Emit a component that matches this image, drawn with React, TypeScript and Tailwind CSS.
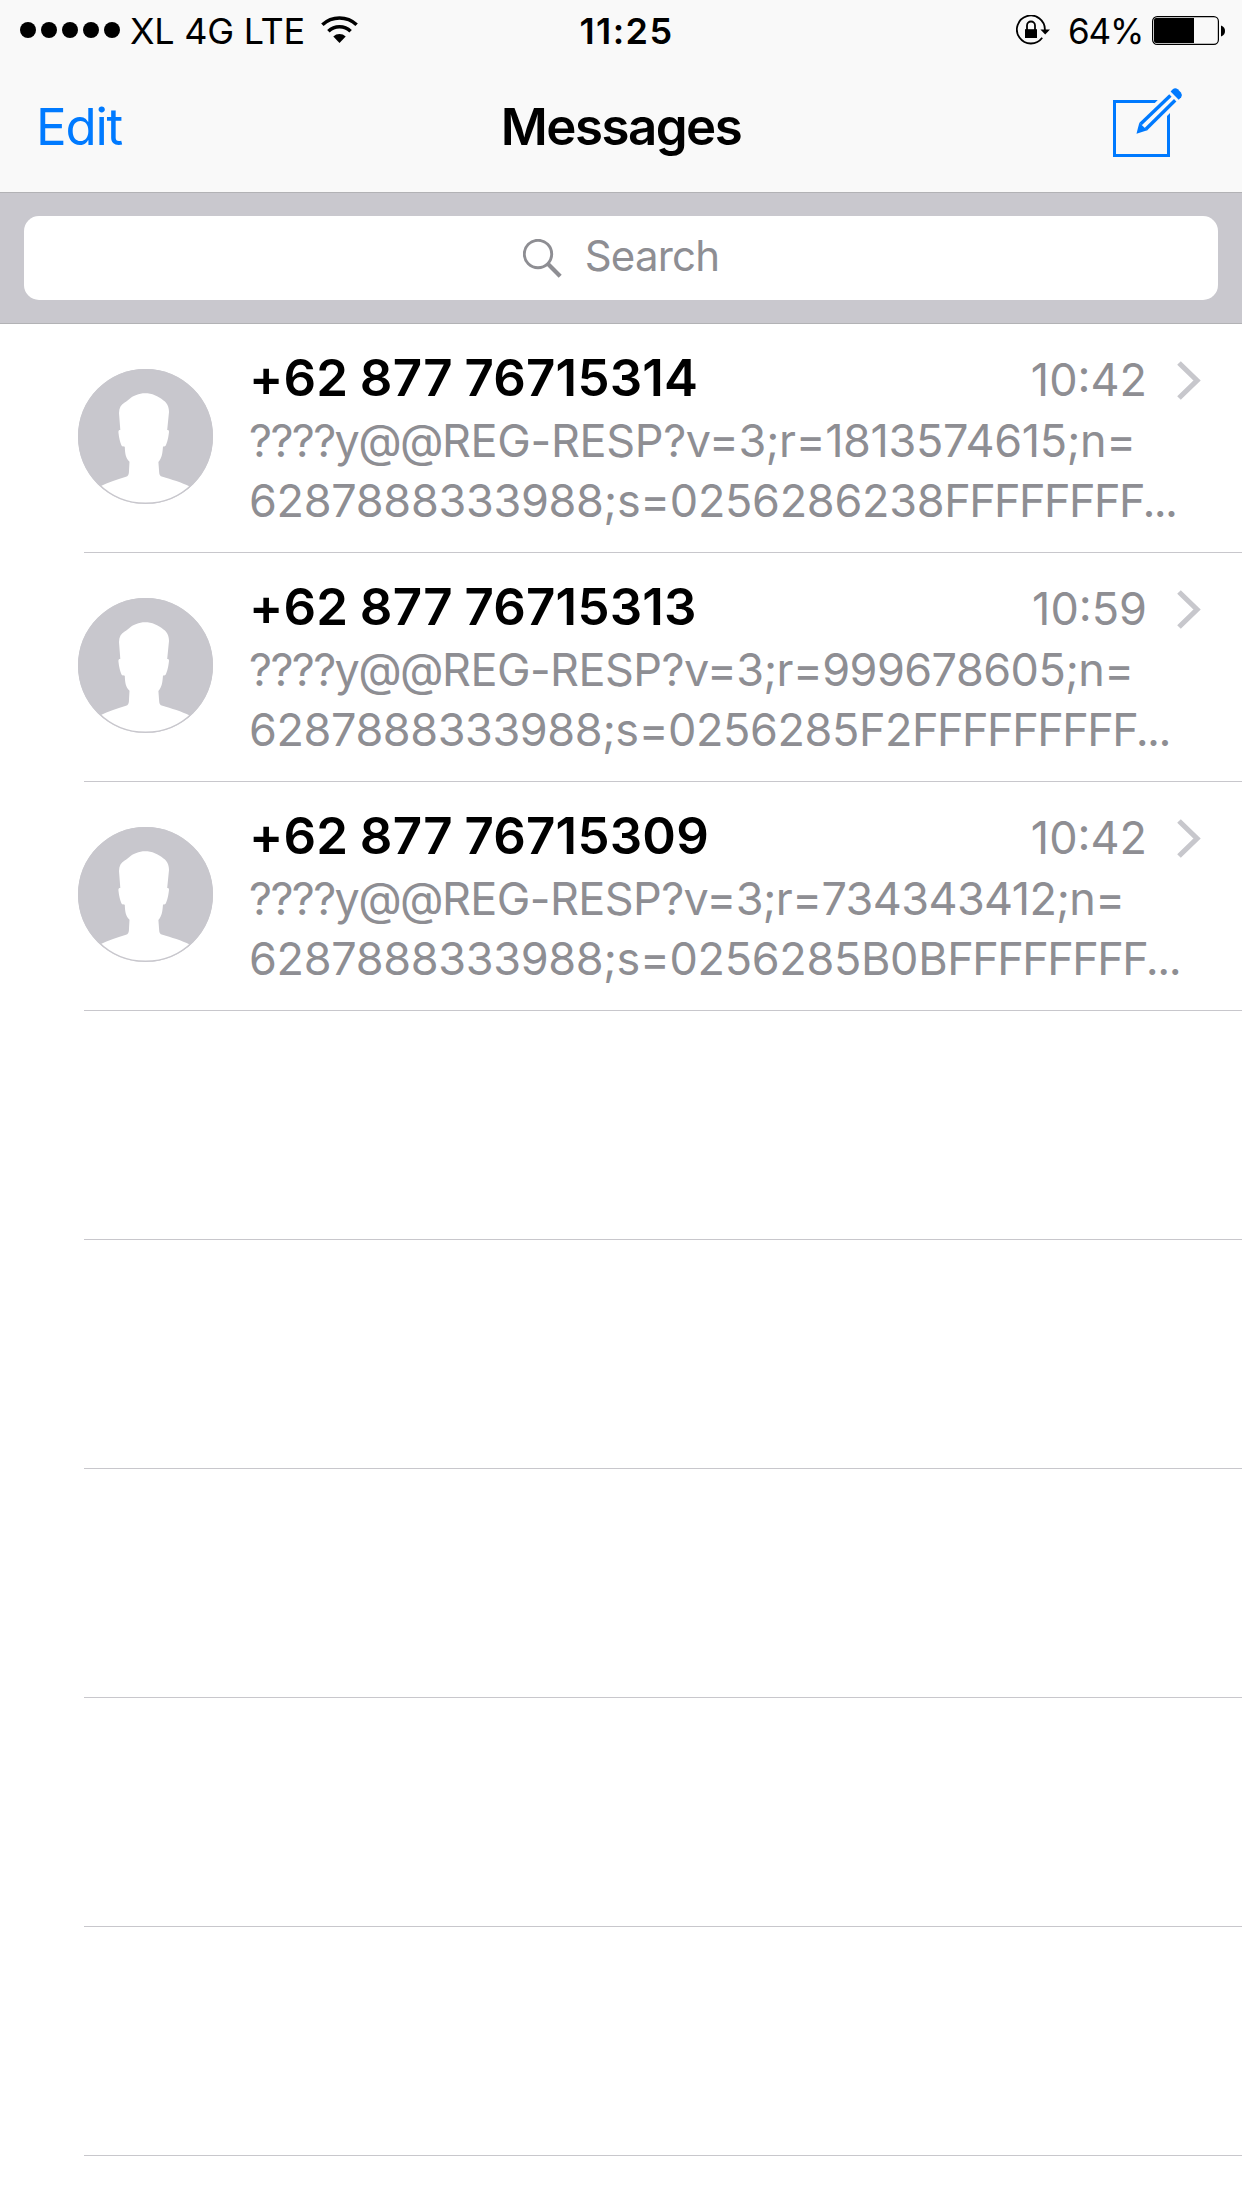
type Run = { text: string; tracking: string };

type Message = {
  sender: string;
  time: string;
  preview: Run[][];
};

const messages: Message[] = [
  {
    sender: "+62 877 76715314",
    time: "10:42",
    preview: [
      [
        { text: "????y@@", tracking: "tracking-[-1.61px]" },
        { text: "REG-RESP?v=3;r=1813574615;n=", tracking: "tracking-[-0.34px]" },
      ],
      [
        { text: "6287888333988;s=0256286238", tracking: "tracking-[-0.3px]" },
        { text: "FFFFFFFF...", tracking: "tracking-[-1.6px]" },
      ],
    ],
  },
  {
    sender: "+62 877 76715313",
    time: "10:59",
    preview: [
      [
        { text: "????y@@", tracking: "tracking-[-1.61px]" },
        { text: "REG-RESP?v=3;r=999678605;n=", tracking: "tracking-[-0.54px]" },
      ],
      [
        { text: "6287888333988;s=0256285F2", tracking: "tracking-[-0.41px]" },
        { text: "FFFFFFFFF...", tracking: "tracking-[-1.56px]" },
      ],
    ],
  },
  {
    sender: "+62 877 76715309",
    time: "10:42",
    preview: [
      [
        { text: "????y@@", tracking: "tracking-[-1.61px]" },
        { text: "REG-RESP?v=3;r=734343412;n=", tracking: "tracking-[-0.59px]" },
      ],
      [
        { text: "6287888333988;s=0256285B0B", tracking: "tracking-[-0.32px]" },
        { text: "FFFFFFFF...", tracking: "tracking-[-1.56px]" },
      ],
    ],
  },
];

const emptyRows = [0, 1, 2, 3, 4];

function WifiIcon() {
  return (
    <svg width="37" height="27" viewBox="0 0 37 27" fill="none" stroke="#000" strokeWidth="3.6">
      <path d="M1.4 8.7A25 25 0 0 1 35.6 8.7" />
      <path d="M7.4 15.2A16.2 16.2 0 0 1 29.6 15.2" />
      <path d="M18.5 27L12.3 20.4A9.2 9.2 0 0 1 24.7 20.4Z" fill="#000" stroke="none" />
    </svg>
  );
}

function RotationLockIcon() {
  return (
    <svg width="34" height="30" viewBox="0 0 34 30" fill="none">
      <path d="M28.9 15A14 14 0 1 0 26.2 22.8" stroke="#000" strokeWidth="1.8" />
      <path d="M24.4 14.5H34L29.2 19.4Z" fill="#000" />
      <rect x="9" y="14.2" width="12" height="8.8" fill="#000" />
      <path d="M11 15V10.5A4 4 0 0 1 19 10.5V15" stroke="#000" strokeWidth="1.8" />
    </svg>
  );
}

function BatteryIcon() {
  return (
    <svg width="73" height="29" viewBox="0 0 73 29" fill="none">
      <rect x="0.6" y="0.6" width="65.8" height="27.8" rx="4.6" stroke="#000" strokeWidth="1.2" />
      <path d="M4 2H42V27H4A2 2 0 0 1 2 25V4A2 2 0 0 1 4 2Z" fill="#000" />
      <path d="M69 9.5C72 10.5 73 12.5 73 15S72 19.5 69 20.5Z" fill="#000" />
    </svg>
  );
}

function ComposeIcon() {
  return (
    <svg width="70" height="70" viewBox="0 0 70 70" fill="none" stroke="#007aff">
      <path d="M44.8 13H0V70H57V26L54 29V67H3V16H41.8Z" fill="#007aff" stroke="none" />
      <path d="M23.5 46.7L26.3 35.8L34.3 43.3Z" fill="#007aff" stroke="none" />
      <path d="M27.6 37L57.4 8.4" strokeWidth="3.4" />
      <path d="M32.8 42.2L62.2 13.2" strokeWidth="3.4" />
      <path d="M57.6 4.4L60 2Q62.3 0.3 64.8 2.2L67.9 5.6Q69.8 8.2 68.2 10.3L65.7 12.7Z" fill="#007aff" stroke="none" />
    </svg>
  );
}

function SearchIcon() {
  return (
    <svg width="39" height="39" viewBox="0 0 39 39" fill="none" stroke="#8e8e93">
      <circle cx="15" cy="15" r="13.7" strokeWidth="2.9" />
      <path d="M24.8 24.8L37.2 37.2" strokeWidth="4.2" />
    </svg>
  );
}

function Chevron() {
  return (
    <svg className="mt-[5px] shrink-0" width="25" height="39" viewBox="0 0 25 39" fill="none">
      <path d="M2 2L20 19.5L2 37" stroke="#c7c7cc" strokeWidth="5.2" />
    </svg>
  );
}

function Avatar() {
  return (
    <svg className="shrink-0" width="135" height="135" viewBox="0 0 135 135">
      <circle cx="67.5" cy="67.5" r="67.5" fill="#c8c7cd" />
      <path
        fill="#fff"
        d="M67 24.3C61 24.3 55 27 52 29.5C49 31.5 48.5 33 47 33.3C43 35.5 41 39 41 44L42.3 61C40.5 61 40.3 62 40.5 64C41 69 42 73 43.5 76.5C44.5 77.8 45.5 77.3 46.8 77.7C47 84 47.5 89 51.5 92.7L50.9 103.5C50.7 106 50 107 48 107.8C40 110.5 30 113.5 22.3 117.2A66.2 66.2 0 0 0 111.7 117.5C104 113.5 93 110.5 84.5 107.8C82 107 81.3 106 81.2 103.5L80.4 93C84 89 84.5 84 85 77.5C86.5 77.5 87.500 77.3 88 76C90 71 90.5 67 91 63C91 61.5 90.7 61 89.2 61L91 43C91 37 88.5 33.5 85.5 31.5C80 27 74 24.3 67 24.3Z"
      />
      <circle cx="67.5" cy="67.500" r="66.8" fill="none" stroke="#c8c7cd" strokeWidth="1.4" />
    </svg>
  );
}

function StatusBar() {
  return (
    <div className="grid h-[60px] grid-cols-[1fr_auto_1fr] text-[36px] leading-[62px] text-black">
      <div className="flex items-start pl-5">
        <div className="flex gap-[5px] pt-[22px]">
          {[0, 1, 2, 3, 4].map((dot) => (
            <span key={dot} className="size-4 rounded-full bg-black" />
          ))}
        </div>
        <span className="ml-[10px] tracking-[-0.24px]">XL 4G LTE</span>
        <div className="ml-4 pt-4">
          <WifiIcon />
        </div>
      </div>
      <div className="pl-[11px] font-semibold tracking-[1.4px]">11:25</div>
      <div className="flex items-start justify-end pr-[17px]">
        <div className="pt-[15px]">
          <RotationLockIcon />
        </div>
        <span className="ml-[18px] text-[35px] tracking-[-1.25px]">64%</span>
        <div className="ml-[9px] pt-4">
          <BatteryIcon />
        </div>
      </div>
    </div>
  );
}

function NavBar() {
  return (
    <div className="grid h-[132px] grid-cols-[1fr_auto_1fr] text-[51px] leading-[133px]">
      <div className="pl-9 tracking-[-1.24px] text-[#007aff]">Edit</div>
      <h1 className="font-semibold tracking-[-1.51px] text-black">Messages</h1>
      <div className="flex justify-end pt-[27px] pr-[59px]">
        <ComposeIcon />
      </div>
    </div>
  );
}

function MessageRow({ message }: { message: Message }) {
  return (
    <div className="flex h-[229px] flex-col">
      <div className="flex flex-1 pl-[78px]">
        <div className="pt-[45px]">
          <Avatar />
        </div>
        <div className="ml-[36px] flex-1 pt-6 whitespace-nowrap">
          <div className="flex h-[60px] items-center pr-[40px]">
            <span className="flex-1 text-[51px] leading-[60px] font-semibold tracking-[0.2px] text-black [word-spacing:-1.5px]">
              {message.sender}
            </span>
            <span className="mr-[30px] pt-1 text-[45px] leading-[60px] text-[#8e8e93]">{message.time}</span>
            <Chevron />
          </div>
          <div className="mt-[3px] text-[45px] leading-[60px] text-[#8e8e93]">
            {message.preview.map((line, i) => (
              <p key={i}>
                {line.map((run) => (
                  <span key={run.text} className={run.tracking}>{run.text}</span>
                ))}
              </p>
            ))}
          </div>
        </div>
      </div>
      <div className="ml-[84px] h-px bg-[#c8c7cc]" />
    </div>
  );
}

export default function App() {
  return (
    <div className="h-[2208px] w-[1242px] overflow-hidden bg-white font-['Inter','Liberation_Sans',sans-serif]">
      <header className="bg-[#f9f9f9]">
        <StatusBar />
        <NavBar />
      </header>

      {/* Search */}
      <div className="h-[132px] border-y border-[#b2b2b5] bg-[#c9c8ce] px-6 pt-[23px]">
        <div className="flex h-[84px] items-center justify-center gap-[23px] rounded-[15px] bg-white">
          <SearchIcon />
          <span className="pb-1 text-[42px] leading-[80px] tracking-[-0.8px] text-[#8e8e93]">Search</span>
        </div>
      </div>

      {/* Conversations */}
      <main>
        {messages.map((message) => (
          <MessageRow key={message.sender} message={message} />
        ))}
        {emptyRows.map((row) => (
          <div key={row} className="flex h-[229px] items-end pl-[84px]">
            <div className="h-px flex-1 bg-[#c8c7cc]" />
          </div>
        ))}
      </main>
    </div>
  );
}
